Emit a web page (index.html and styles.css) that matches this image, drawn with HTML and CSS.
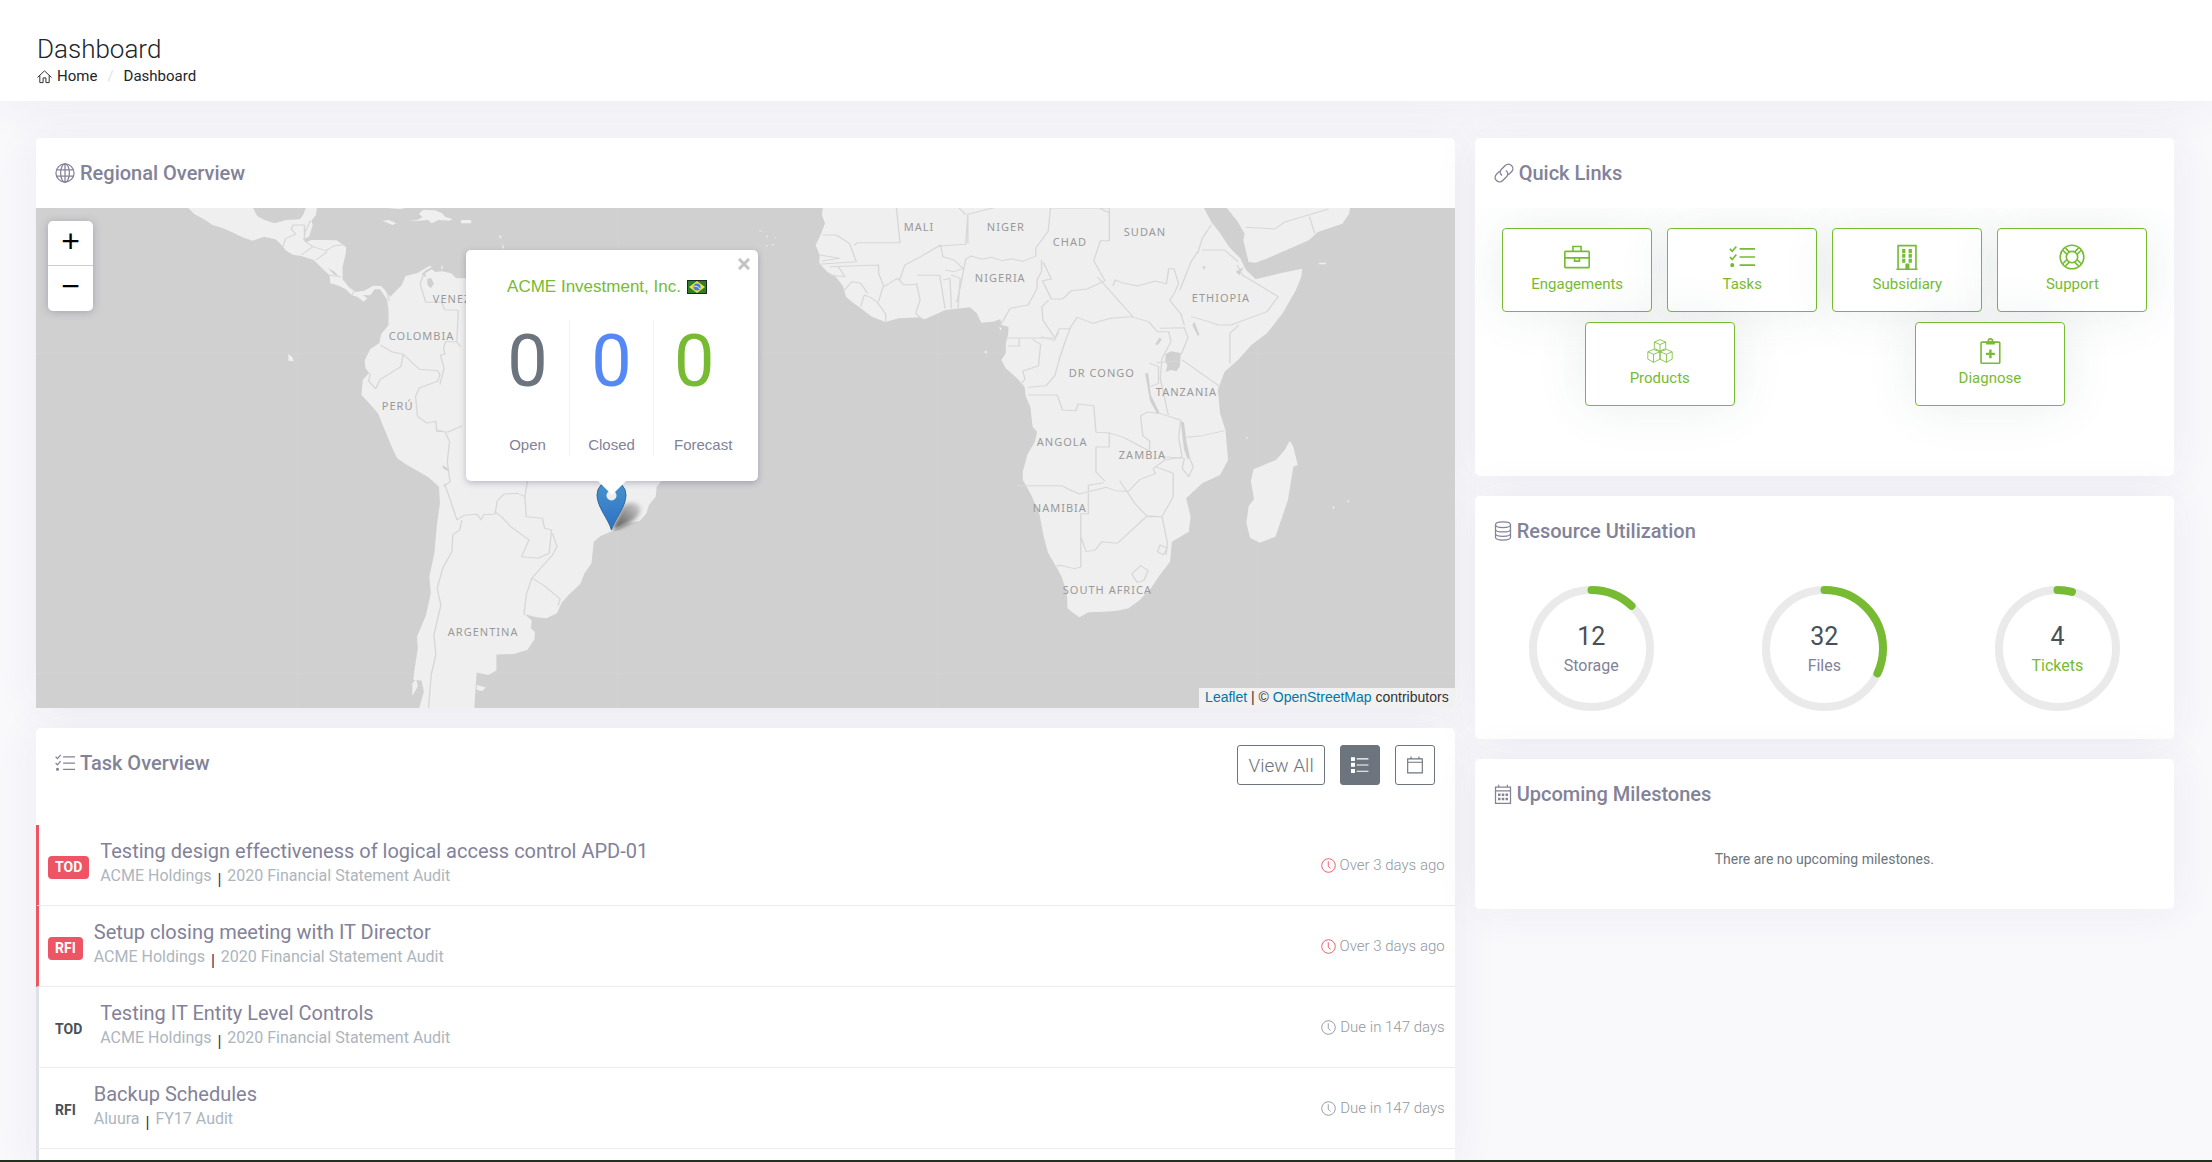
FILE: index.html
```html
<!DOCTYPE html>
<html lang="en">
<head>
    <meta charset="UTF-8">
    <meta name="viewport" content="width=device-width, initial-scale=1.0">
    <title>Dashboard</title>
    <link rel="stylesheet" href="styles.css">
</head>
<body>

    <!-- shared icons -->
    <svg class="sprite" aria-hidden="true">
        <symbol id="icon-tasks" viewBox="0 0 32 32">
            <path d="M1 6l3 3 5-6M1 16l3 3 5-6M13 6h19M13 16h19M13 26h19"/>
            <circle class="solid" cx="4" cy="26" r="1.5"/>
        </symbol>
        <symbol id="icon-clock" viewBox="0 0 32 32">
            <circle cx="16" cy="16" r="14.5"/>
            <path d="M15.500 7v11l5 4"/>
        </symbol>
    </svg>

    <header class="page-header">
        <h1>Dashboard</h1>
        <nav class="breadcrumb" aria-label="Breadcrumb">
            <a href="#">
                <svg class="icon icon-sm" viewBox="0 0 32 32"><path d="M1 18L16 4l15 14M6 14v15h7V19h6v10h7V14"/></svg>
                Home
            </a>
            <span class="divider">/</span>
            <a href="#">Dashboard</a>
        </nav>
    </header>

    <main>
        <div class="col-main">
            <section class="card">
                <div class="card-header">
                    <h2>
                        <svg class="icon" viewBox="0 0 32 32"><circle cx="16" cy="16" r="14.500"/><ellipse cx="16" cy="16" rx="7" ry="14.500"/><path d="M2 11h28M2 21h28M16 1v30"/></svg>
                        Regional Overview
                    </h2>
                </div>
                <div class="map">
                    <svg class="map-tiles" viewBox="0 0 1419 500" preserveAspectRatio="xMidYMid slice" role="img" aria-label="Map of South America and Africa">
                        <path class="seam" d="M262.500 0v500M582.500 0v500M902.500 0v500M1222.500 0v500M0 145.500h1419M0 465.500h1419"/>

                        <!-- Americas -->
                        <g transform="translate(0 -8) scale(.4592 .3333)">
                            <path class="land" d="M332 24L345 42 366 58 385 75 408 85 430 98 450 112 472 122 497 110 522 118 533 132 545 152 560 164 578 168 605 180 625 207 640 226 641 250 660 257 675 268 688 286 700 290 714 305 722 295 712 285 728 286 738 268 750 268 758 285 765 298 768 330 768 376 752 402 748 430 728 448 716 482 718 505 726 518 712 540 709 585 725 608 745 640 760 690 775 740 787 775 805 792 855 832 878 860 880 910 873 980 868 1060 857 1130 860 1180 850 1245 830 1310 832 1345 824 1415 822 1440 840 1442 845 1475 835 1524 955 1524 956 1495 960 1418 985 1425 1003 1412 1003 1364 1040 1362 1070 1350 1086 1318 1087 1297 1078 1285 1080 1262 1065 1243 1090 1252 1112 1255 1135 1240 1145 1208 1160 1185 1185 1153 1195 1120 1210 1090 1215 1025 1230 1008 1255 993 1290 970 1315 963 1330 940 1335 915 1350 890 1352 860 1400 780 1450 600 1500 500 1400 400 1200 300 1000 238 935 235 915 235 905 220 885 214 870 216 862 208 848 220 850 232 840 222 850 210 862 202 858 197 830 220 805 228 797 255 772 290 765 278 752 258 735 257 715 272 697 276 682 262 668 238 668 200 675 160 676 142 655 121 625 120 600 120 588 126 582 118 595 110 603 75 600 62 610 45 612 24 588 24 582 45 575 58 545 60 520 70 498 60 482 48 473 24z"/>
                            <path class="land" d="M755 62l14-2 16 10-8 5zM812 62l20-3 10-8-8-10 10-12 25 2 15 8 8 12 15 6-5 5-25-2-15 10-8-10-20 2zM926 60h22v10h-22zM550 462l8 8 4 14-12-2zM765 24l20-1 20 3-10 2zM1008 105l6 4-2 8zM1016 130l4 14-4 2zM960 1455l20 8-8 10-12-3zM820 1450l8-12 4 20-12 30zM883 196l4 6-4 8z"/>
                            <path class="water" d="M852 238l8-5 7 18-7 14-7-10zM636 205l12 8 12 15-10-4zM885 795l14 12-3 6-9-8z"/>
                            <path class="border" d="M560 75h25v45M598 62l-12 36-2 20M560 75l-4 12 10 15-22 14-6 25M585 122l18 18-25 25M603 140l28 12 20-15 22-3M610 180l25-25M640 226l25 5M688 286l6-14M765 278l5 25"/>
                            <path class="border" d="M845 222l-8 30 12 55 35 0 6 22 30 2-3 95 8 15M917 425l-25 0-4 20 3 18-10 2 8 40-9 48M800 465l-5 35-45 38-10 28-15-22 3-25M750 435l25 20 25 8 35 45 40 4 5 12-5 20-40 20-8 25 4 60 20 20 20-5 2 30 25 2 30-18M873 690l18 5 10 30-5 60 6 60-14 15"/>
                            <path class="border" d="M890 850l15 60 12 50 15-14 28-3 10 16 5-15 25-2 5-40 15-20 30-2 15 10 6-50M1065 890l3 60 35 5 5 30 15 5-5 70-25 15-35-5 16-50-40-40-20-30-15-15M1125 1000l10 40-10 25-45 70-12 50-5 60M1082 1135l25 22 35 40-5 20"/>
                            <path class="border" d="M928 960l-5 30-15 15-2 50-20 50-12 60 8 50-15 90 4 60-10 60-6 100"/>
                        </g>

                        <!-- Africa -->
                        <g transform="translate(720 -8) scale(.4464 .3333)">
                            <path class="land" d="M150 24L148 45 155 70 145 105 134 135 143 165 142 190 160 215 180 232 195 258 202 290 215 305 235 325 260 350 290 366 320 355 366 352 378 358 400 345 425 330 480 322 495 340 505 368 530 365 548 358 550 375 566 380 565 405 560 430 560 460 550 480 560 505 585 535 602 560 605 590 615 620 620 680 630 695 625 725 608 765 598 815 598 840 615 880 635 940 645 1010 655 1060 672 1098 685 1130 697 1180 698 1225 712 1240 725 1252 745 1237 780 1235 810 1232 835 1225 860 1200 885 1165 905 1125 928 1085 932 1025 970 995 974 950 964 895 1000 850 1040 825 1058 780 1052 690 1040 640 1035 570 1050 515 1080 480 1110 435 1145 400 1180 340 1210 270 1222 230 1224 206 1180 218 1120 238 1098 210 1085 175 1060 140 1040 100 1020 65 1004 24z"/>
                            <path class="land" d="M1055 24l25 42 15 35-3 20 12 65 15 2 25-12 95-55 20-25 55-25 15-30 2-17zM1196 722l8 18 10 55-10 5-12 100-28 110-35 18-22-15-8-45 5-50 12-20-7-55 6-35 50-28 20-30zM1262 188h15v5h-15zM513 452h4v8h-4zM1291 918l6 4-3 6zM1325 899l5 4-4 5zM545 380l6 4-3 8zM1099 706l3 10-3 2zM1127 734l4 6zM8 90l4 4-3 3zM24 106l4 3-4 4zM42 112l4 2-2 3zM22 135l5 2-4 3zM36 131l5 4-4 2z"/>
                            <path class="water" d="M918 462l12-8 12 3 10 2-2 40-8 15-12-4-12 6 4-20-5-14zM872 520l7 0 6 65 20 55-6 2-16-40zM952 665l7 2 6 60 8 48-6 2-8-30zM905 412l-10 20 4 4 10-16zM982 365l12 40-4 2-12-32zM1000 198l8 2-4 10zM1075 215l18-14-10 25zM1561 975l6-20v25z"/>
                            <path class="border" d="M315 24l8 104-95 0-8 8M150 105l30 0 30 25 15 55-85 8M143 165l45 10-40 8M165 200l110-5 0 25 12 40 30-25 15 20 30-2M185 200l15 30-35-5M250 280l-15-30-20-5-20 30M235 320l8-35 15 8 15 15 18 35 0 25M275 305l10-45M360 250l8 50-10 40 15 18M362 226h50l12 100M420 240l15-5 3 90M438 225l20 10-5 90M322 240l12-45 35-25 45-35 5 35 25 10 20 25-20 10-20-5"/>
                            <path class="border" d="M410 138l60-5 5-90 65-22M455 24l15 20M475 50l0 80M660 24l-5 70-28 50 0 25-30 15-25-8-20 6-25-10-20 6-25-10-12 10-10 70-10 60M660 24h132v98h-20l-15 60 25 60-40 25-35 5-20 25-25 0-20-55 20-5-18-50M640 180l0 35-10 25 0 25-20 50-40 10-22 50M656 300l-15 20 2 40 25 50M770 24l22 15"/>
                            <path class="border" d="M560 414h110l10-28 25 0M565 438h25v-22M620 418l18 15-5 65-35 15 5 25-10 15M610 562l40-5 20-30 10-50 15-60 10-35 15-30 35 18 40-15 45-5 40 15 20 30 25 0 5 30-20 50-4 60 18 110M765 230l30 45 50 75M800 258l5-18 20 10 30 8 40-15 25 8 5-45 12 0 10 45-10 30-10 20 25 40 8 35M640 410l28 12 10-25"/>
                            <path class="border" d="M990 155l-15 30-25 85M1020 75l-20 40-10 45M1000 150l50 0 30 35M1078 195l12 30 80 65-25 45-80 40-30 0-20-10-40-15M1062 490v-90l20-25M955 480l85 80M898 488l50-5M905 385l55-2 8 30-15 50M882 490l20 10 0 50-18 10M610 585h65l12 45 30 2 5-20 35 5 5 80 30 2v42h-30v75l20 28"/>
                            <path class="border" d="M790 698l35 15 35 25 22 15 0-30-15-15-5-60 15-12 30 5 45 20-5 50 8 60-40 10-25 25 5 15-35 18-25 35-30-2-20-10-60 20-25-15-15-10-100 0M965 712l35-5 50-15M910 770l50 5-5 30 15 25 10-30-10-30M895 800l40 20 0 70-25 60-35-3-25-35-10-20-25-50M780 848l-35 8v85h-17v160l-15 5-30-10-12 3M728 1010l12 45 20-5 15-25 35 5 65-80 35 0 12 80-3 35M905 1035l-5 20 12 10 10-20zM862 1097l17 15-10 30-15 5-12-25z"/>
                            <path class="border" d="M1098 82l65 5 20-20 100-40M1240 50l12 50"/>
                        </g>

                        <g class="country">
                            <text x="397" y="95">VENEZUELA</text>
                            <text x="353" y="132">COLOMBIA</text>
                            <text x="346" y="202">PERÚ</text>
                            <text x="412" y="428">ARGENTINA</text>
                            <text x="868" y="23">MALI</text>
                            <text x="951" y="23">NIGER</text>
                            <text x="1017" y="38">CHAD</text>
                            <text x="1088" y="28">SUDAN</text>
                            <text x="939" y="74">NIGERIA</text>
                            <text x="1156" y="94">ETHIOPIA</text>
                            <text x="1033" y="169">DR CONGO</text>
                            <text x="1120" y="188">TANZANIA</text>
                            <text x="1001" y="238">ANGOLA</text>
                            <text x="1083" y="251">ZAMBIA</text>
                            <text x="997" y="304">NAMIBIA</text>
                            <text x="1027" y="386">SOUTH AFRICA</text>
                        </g>
                    </svg>

                    <div class="zoom-control">
                        <button type="button" aria-label="Zoom in">+</button>
                        <button type="button" aria-label="Zoom out">−</button>
                    </div>

                    <svg class="marker" viewBox="0 0 62 51" aria-hidden="true">
                        <defs>
                            <linearGradient id="pin" x1="0" y1="0" x2="0" y2="1">
                                <stop offset="0" stop-color="#4a94cc"/>
                                <stop offset="1" stop-color="#2b70c6"/>
                            </linearGradient>
                            <linearGradient id="pin-shadow" x1="0" y1="1" x2="1" y2="0">
                                <stop offset="0" stop-color="#000" stop-opacity=".7"/>
                                <stop offset="1" stop-color="#000" stop-opacity=".1"/>
                            </linearGradient>
                            <filter id="blur"><feGaussianBlur stdDeviation="2"/></filter>
                        </defs>
                        <path d="M16 50L27 26c7-6 20-4 17 6-3 8-14 14-28 18z" fill="url(#pin-shadow)" filter="url(#blur)"/>
                        <path d="M15.500 50C13 40 1 27 1 15a14.500 14.500 0 0 1 29 0c0 12-12 25-14.500 35z" fill="url(#pin)" stroke="#2e6b9c"/>
                        <circle cx="15.500" cy="15.500" r="5" fill="#eee"/>
                    </svg>

                    <div class="popup">
                        <button type="button" class="popup-close" aria-label="Close">
                            <svg viewBox="0 0 12 12"><path d="M1 1l10 10M11 1L1 11"/></svg>
                        </button>
                        <p class="popup-title">
                            <a href="#">ACME Investment, Inc.</a>
                            <svg class="flag" viewBox="0 0 20 14"><path fill="#2f7d2c" stroke="#1c2b1c" stroke-width="2" d="M0 0h20v14H0z"/><path fill="#e8e337" d="M10 1l8 6-8 6-8-6z"/><circle cx="10" cy="7" r="3.500" fill="#4b7be0"/><path d="M7 6q4 0 6 3" fill="none" stroke="#dfe8f5"/></svg>
                        </p>
                        <div class="stats">
                            <div class="stat"><b class="open">0</b><span>Open</span></div>
                            <div class="stat"><b class="closed">0</b><span>Closed</span></div>
                            <div class="stat"><b class="forecast">0</b><span>Forecast</span></div>
                        </div>
                    </div>

                    <div class="attribution">
                        <a href="#">Leaflet</a> | © <a href="#">OpenStreetMap</a> contributors
                    </div>
                </div>
            </section>

            <section class="card">
                <div class="card-header">
                    <h2>
                        <svg class="icon"><use href="#icon-tasks"/></svg>
                        Task Overview
                    </h2>
                    <div class="actions">
                        <button type="button" class="btn">View All</button>
                        <button type="button" class="btn active" aria-label="List view">
                            <svg class="icon" viewBox="0 0 32 32"><path d="M10 5h21M10 16h21M10 27h21"/><path class="solid" d="M1 3h5v5H1zM1 13h5v5H1zM1 24h5v5H1z"/></svg>
                        </button>
                        <button type="button" class="btn" aria-label="Calendar view">
                            <svg class="icon" viewBox="0 0 32 32"><path d="M3 5h26v25H3zM3 11h26M9 1v4M23 1v4"/></svg>
                        </button>
                    </div>
                </div>
                <ul class="tasks">
                    <li class="task overdue">
                        <span class="tag">TOD</span>
                        <div class="task-body">
                            <a href="#" class="task-title">Testing design effectiveness of logical access control APD-01</a>
                            <p>ACME Holdings <i>|</i> 2020 Financial Statement Audit</p>
                        </div>
                        <span class="due"><svg class="icon icon-sm"><use href="#icon-clock"/></svg> Over 3 days ago</span>
                    </li>
                    <li class="task overdue">
                        <span class="tag">RFI</span>
                        <div class="task-body">
                            <a href="#" class="task-title">Setup closing meeting with IT Director</a>
                            <p>ACME Holdings <i>|</i> 2020 Financial Statement Audit</p>
                        </div>
                        <span class="due"><svg class="icon icon-sm"><use href="#icon-clock"/></svg> Over 3 days ago</span>
                    </li>
                    <li class="task">
                        <span class="tag">TOD</span>
                        <div class="task-body">
                            <a href="#" class="task-title">Testing IT Entity Level Controls</a>
                            <p>ACME Holdings <i>|</i> 2020 Financial Statement Audit</p>
                        </div>
                        <span class="due"><svg class="icon icon-sm"><use href="#icon-clock"/></svg> Due in 147 days</span>
                    </li>
                    <li class="task">
                        <span class="tag">RFI</span>
                        <div class="task-body">
                            <a href="#" class="task-title">Backup Schedules</a>
                            <p>Aluura <i>|</i> FY17 Audit</p>
                        </div>
                        <span class="due"><svg class="icon icon-sm"><use href="#icon-clock"/></svg> Due in 147 days</span>
                    </li>
                    <li class="task task-more"></li>
                </ul>
            </section>
        </div>

        <div class="col-side">
            <section class="card">
                <div class="card-header">
                    <h2>
                        <svg class="icon" viewBox="0 0 32 32"><path d="M13 20c-4-3-4-7-1-10l6-6c3-3 7-3 10 0s3 7 0 10l-5 5M19 12c4 3 4 7 1 10l-6 6c-3 3-7 3-10 0s-3-7 0-10l5-5"/></svg>
                        Quick Links
                    </h2>
                </div>
                <div class="links">
                    <a href="#" class="link">
                        <svg class="icon" viewBox="0 0 32 32"><rect x="1" y="9" width="30" height="20" rx="1"/><path d="M11 9V3h10v6M1 17h30M13 17v4h6v-4"/></svg>
                        Engagements
                    </a>
                    <a href="#" class="link">
                        <svg class="icon"><use href="#icon-tasks"/></svg>
                        Tasks
                    </a>
                    <a href="#" class="link">
                        <svg class="icon" viewBox="0 0 32 32"><path d="M5 31V2h22v29M3 31h26"/><path class="solid" d="M11 7h2v3h-2zM19 7h2v3h-2zM11 13h2v3h-2zM19 13h2v3h-2zM11 19h2v3h-2zM19 19h2v3h-2zM15 25h3v6h-3z"/></svg>
                        Subsidiary
                    </a>
                    <a href="#" class="link">
                        <svg class="icon" viewBox="0 0 32 32"><circle cx="16" cy="16" r="14.500"/><circle cx="16" cy="16" r="7"/><path d="M5 8l5 5M8 5l5 5M27 8l-5 5M24 5l-5 5M5 24l5-5M8 27l5-5M27 24l-5-5M24 27l-5-5"/></svg>
                        Support
                    </a>
                    <a href="#" class="link">
                        <svg class="icon icon-thin" viewBox="0 0 32 32"><path d="M16 2l7 3v8l-7 3-7-3V5zM9 5l7 3 7-3M16 8v8M8 14l8 3v9l-8 4-7-4v-9zM1 17l7 3 8-3M8 20v10M24 14l7 3v9l-7 4-8-4v-9zM16 17l8 3 7-3M24 20v10"/></svg>
                        Products
                    </a>
                    <a href="#" class="link">
                        <svg class="icon" viewBox="0 0 32 32"><rect x="5" y="5" width="23" height="26" rx="1"/><circle cx="16.500" cy="3.500" r="2.500"/><path class="solid" d="M12 5h9v2h-9z"/><path class="solid plain" d="M15 14h3v4h4v3h-4v4h-3v-4h-4v-3h4z"/></svg>
                        Diagnose
                    </a>
                </div>
            </section>

            <section class="card">
                <div class="card-header">
                    <h2>
                        <svg class="icon icon-narrow" viewBox="2 0 28 32"><path d="M4 6c0-6 24-6 24 0v20c0 6-24 6-24 0zM4 6c0 6 24 6 24 0M4 13c0 6 24 6 24 0M4 20c0 6 24 6 24 0"/></svg>
                        Resource Utilization
                    </h2>
                </div>
                <div class="gauges">
                    <div class="gauge">
                        <svg viewBox="0 0 125 125"><circle class="track" cx="62.500" cy="62.500" r="58.500"/><circle class="bar" cx="62.500" cy="62.500" r="58.500" pathLength="100" stroke-dasharray="12 100"/></svg>
                        <div class="gauge-text"><strong>12</strong><span>Storage</span></div>
                    </div>
                    <div class="gauge">
                        <svg viewBox="0 0 125 125"><circle class="track" cx="62.500" cy="62.500" r="58.500"/><circle class="bar" cx="62.500" cy="62.500" r="58.500" pathLength="100" stroke-dasharray="32 100"/></svg>
                        <div class="gauge-text"><strong>32</strong><span>Files</span></div>
                    </div>
                    <div class="gauge">
                        <svg viewBox="0 0 125 125"><circle class="track" cx="62.500" cy="62.500" r="58.500"/><circle class="bar" cx="62.500" cy="62.500" r="58.500" pathLength="100" stroke-dasharray="4 100"/></svg>
                        <div class="gauge-text"><strong>4</strong><a href="#">Tickets</a></div>
                    </div>
                </div>
            </section>

            <section class="card">
                <div class="card-header">
                    <h2>
                        <svg class="icon icon-narrow" viewBox="2 0 28 32"><path d="M4 5h24v26H4zM4 11h24M9 1v4M23 1v4"/><path class="solid" d="M9 16h2v2H9zM15 16h2v2h-2zM21 16h2v2h-2zM9 23h2v2H9zM15 23h2v2h-2zM21 23h2v2h-2z"/></svg>
                        Upcoming Milestones
                    </h2>
                </div>
                <p class="empty">There are no upcoming milestones.</p>
            </section>
        </div>
    </main>

    <div class="bottom-bar"></div>

</body>
</html>
```
FILE: styles.css
```css
* {
    margin: 0;
    padding: 0;
    box-sizing: border-box;
}
body {
    display: flex;
    flex-direction: column;
    height: 100vh;
    overflow: hidden;
    font-family: Roboto, "Liberation Sans", sans-serif;
    font-size: 15px;
    background-color: #f9f9fc;
    color: #212529;
}
a {
    color: inherit;
    text-decoration: none;
}
button {
    font: inherit;
    cursor: pointer;
}
.sprite {
    display: none;
}
.icon {
    width: 20px;
    height: 20px;
    flex: none;
    fill: none;
    stroke: currentColor;
    stroke-width: 2;
    overflow: visible;
}
.icon-sm {
    width: 15px;
    height: 15px;
}
.icon-narrow {
    width: 18px;
}
.solid {
    fill: currentColor;
}
.plain {
    stroke: none;
}

.page-header {
    flex: none;
    padding: 32px 37px 15px;
    background-color: #fff;
    box-shadow: 0 0 50px rgba(62, 57, 107, 0.08);
}
.page-header h1 {
    font-size: 26px;
    font-weight: 300;
    line-height: 34px;
}
.breadcrumb {
    display: flex;
    line-height: 20px;
}
.breadcrumb a {
    display: flex;
    align-items: center;
    gap: 5px;
}
.divider {
    padding: 0 10px;
    color: #dee2e6;
}

main {
    flex: 1;
    min-height: 0;
    display: grid;
    grid-template-columns: 2fr 1fr;
    grid-template-rows: 100%;
    padding: 37px 28px 0 26px;
    overflow: hidden;
}
.col-main,
.col-side {
    display: flex;
    flex-direction: column;
    gap: 20px;
    min-width: 0;
    padding: 0 10px;
}
.card {
    flex: none;
    background-color: #fff;
    border-radius: 5px;
    box-shadow: 0 0 45px rgba(62, 57, 107, 0.07);
}
.card-header {
    display: flex;
    justify-content: space-between;
    padding: 0 20px 0 19px;
    height: 70px;
}
.card-header h2 {
    display: flex;
    align-items: center;
    gap: 5px;
    font-size: 20px;
    font-weight: 500;
    color: #828299;
}

/* map */
.map {
    position: relative;
    height: 500px;
    overflow: hidden;
    background-color: #d0d0d0;
    font-family: "Liberation Sans", Arial, sans-serif;
}
.map-tiles {
    display: block;
    width: 100%;
    height: 100%;
}
.land {
    fill: #efefef;
}
.water {
    fill: #d0d0d0;
}
.border {
    fill: none;
    stroke: #d7d7d7;
    stroke-width: 3;
    stroke-linejoin: round;
}
.seam {
    stroke: #d3d3d3;
}
.country text {
    font-family: "Noto Sans", sans-serif;
    font-size: 11px;
    letter-spacing: 1px;
    fill: #999;
}
.zoom-control {
    position: absolute;
    left: 12px;
    top: 13px;
    display: flex;
    flex-direction: column;
    width: 45px;
    border-radius: 5px;
    background-color: #fff;
    box-shadow: 0 1px 8px rgba(62, 57, 107, 0.3);
}
.zoom-control button {
    height: 45px;
    padding-bottom: 5px;
    border: none;
    background: none;
    font-size: 32px;
    line-height: 38px;
    color: #000;
}
.zoom-control button:first-child {
    border-bottom: 1px solid #ccc;
}
.marker {
    position: absolute;
    left: 560px;
    top: 272px;
    width: 62px;
    height: 51px;
}
.popup {
    position: absolute;
    left: 430px;
    top: 42px;
    width: 292px;
    padding: 24px 20px 25px;
    border-radius: 5px;
    background-color: #fff;
    box-shadow: 0 2px 6px rgba(62, 57, 107, 0.3);
}
.popup::after {
    content: "";
    position: absolute;
    left: 132px;
    top: 100%;
    border: 14px solid transparent;
    border-top-color: #fff;
    border-bottom: none;
}
.popup-close {
    position: absolute;
    right: 8px;
    top: 8px;
    width: 12px;
    height: 12px;
    border: none;
    background: none;
}
.popup-close svg {
    display: block;
    stroke: #c3c3c3;
    stroke-width: 3;
}
.popup-title {
    display: flex;
    align-items: center;
    justify-content: center;
    gap: 6px;
    margin-bottom: 20px;
    padding-right: 10px;
    font-size: 17px;
    line-height: 26px;
    color: #76bb32;
}
.flag {
    width: 20px;
    height: 14px;
}
.stats {
    display: flex;
}
.stat {
    display: flex;
    flex-direction: column;
    align-items: center;
    justify-content: space-between;
    width: 84px;
    height: 136px;
    border-right: 1px solid #f3f3f6;
}
.stat:last-child {
    width: auto;
    padding-left: 20px;
    border-right: none;
    align-items: flex-start;
}
.stat b {
    font-family: Roboto, sans-serif;
    font-size: 72px;
    font-weight: 400;
    line-height: 84px;
}
.stat span {
    font-size: 15px;
    line-height: 22px;
    color: #828299;
}
.stat .open {
    color: #6c757d;
}
.stat .closed {
    color: #5588f5;
}
.stat .forecast {
    color: #76bb32;
}
.attribution {
    position: absolute;
    right: 0;
    bottom: 0;
    padding: 0 6px 2px;
    background-color: rgba(255, 255, 255, 0.7);
    font-size: 14px;
    line-height: 18px;
    color: #333;
}
.attribution a {
    color: #0078a8;
}

/* tasks */
.actions {
    display: flex;
    gap: 15px;
    padding-top: 17px;
}
.btn {
    display: flex;
    align-items: center;
    height: 40px;
    padding: 0 10px;
    border: 1px solid #6c757d;
    border-radius: 3px;
    background-color: #fff;
    color: #6c757d;
    font-size: 19px;
    font-weight: 300;
}
.btn .icon {
    width: 18px;
}
.btn.active {
    background-color: #6c757d;
    color: #fff;
}
.tasks {
    list-style: none;
    padding-top: 27px;
}
.task {
    display: flex;
    align-items: center;
    height: 81px;
    padding: 0 10px 0 9px;
    border-left: 3px solid #dee2e6;
    border-bottom: 1px solid #ececee;
}
.task-more {
    height: 20px;
}
.tag {
    margin-top: 5px;
    padding: 0 7px;
    border-radius: 4px;
    font-weight: 700;
    font-size: 14px;
    line-height: 23px;
    color: #495057;
}
.overdue {
    border-left-color: #ed5565;
}
.overdue .tag {
    background-color: #ed5565;
    color: #fff;
}
.task-body {
    flex: 1;
    padding: 0 11px 4px;
}
.task-title {
    font-size: 20px;
    line-height: 26px;
    color: #828299;
}
.task-body p {
    font-size: 16px;
    line-height: 24px;
    color: #adb5bd;
}
.task-body i {
    margin: 0 2px;
    font-style: normal;
    vertical-align: -4px;
    line-height: 16px;
    color: #2a2e4a;
}
.due {
    display: flex;
    align-items: center;
    gap: 4px;
    font-weight: 300;
    color: #8f98a0;
}
.overdue .due .icon {
    color: #ed5565;
}

/* quick links */
.links {
    display: flex;
    flex-wrap: wrap;
    justify-content: space-around;
    row-gap: 10px;
    padding: 20px 19px 70px 20px;
    overflow: hidden;
}
.link {
    display: flex;
    flex-direction: column;
    align-items: center;
    gap: 4px;
    width: 150px;
    height: 84px;
    padding-top: 15px;
    border: 1px solid #76bb32;
    border-radius: 4px;
    background-color: #fff;
    box-shadow: 0 0 50px rgba(47, 79, 79, 0.1);
    line-height: 20px;
    color: #76bb32;
}
.link .icon {
    width: 26px;
    height: 26px;
}
.icon-thin {
    stroke-width: 1;
}

/* gauges */
.gauges {
    display: grid;
    grid-template-columns: repeat(3, 1fr);
    justify-items: center;
    padding: 20px 0 28px;
}
.gauge {
    display: grid;
    width: 125px;
    height: 125px;
}
.gauge svg,
.gauge-text {
    grid-area: 1 / 1;
}
.gauge svg {
    fill: none;
    stroke-width: 8;
    transform: rotate(-90deg);
}
.track {
    stroke: #eaeaea;
}
.bar {
    stroke: #76bb32;
    stroke-linecap: round;
}
.gauge-text {
    display: flex;
    flex-direction: column;
    align-items: center;
    justify-content: center;
    font-size: 16px;
    color: #828299;
}
.gauge-text strong {
    font-size: 25px;
    font-weight: 400;
    line-height: 34px;
    color: #495057;
}
.gauge-text span,
.gauge-text a {
    line-height: 24px;
}
.gauge-text a {
    color: #76bb32;
}
.empty {
    padding: 20px 20px 40px;
    font-size: 14px;
    line-height: 20px;
    text-align: center;
    color: #6c757d;
}

.bottom-bar {
    position: relative;
    flex: none;
    height: 2px;
    background-color: #22301f;
}
```
